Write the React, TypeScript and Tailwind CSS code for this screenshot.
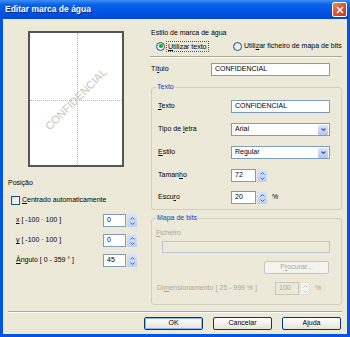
import React from "react";

const inputCls = "flex h-[13px] items-center border border-[#7f9db9] bg-white pl-[3px]";

function Spin({ off }: { off?: boolean }) {
  const c = off ? "#c9c7ba" : "#4d6185";
  return (
    <div
      className={
        off
          ? "ml-[1px] flex h-[13px] w-[10px] flex-col items-center justify-center gap-[2px] rounded-[1px] border border-[#e2e0d4] bg-[#f5f4ef]"
          : "ml-[1px] flex h-[13px] w-[10px] flex-col items-center justify-center gap-[2px] rounded-[1px] bg-gradient-to-b from-[#d9e4fc] to-[#bcd0f7]"
      }
    >
      <svg width="5" height="3" viewBox="0 0 5 3">
        <path d="M0.5 2.5 L2.5 0.5 L4.5 2.5" fill="none" stroke={c} strokeWidth="1" />
      </svg>
      <svg width="5" height="3" viewBox="0 0 5 3">
        <path d="M0.5 0.5 L2.5 2.5 L4.5 0.5" fill="none" stroke={c} strokeWidth="1" />
      </svg>
    </div>
  );
}

function Select({ value }: { value: string }) {
  return (
    <div className={`${inputCls} w-[99px] pr-[1px]`}>
      <span className="flex-1">{value}</span>
      <div className="flex h-[10px] w-[10px] items-center justify-center rounded-[1px] bg-gradient-to-b from-[#dce6fd] to-[#b1c6f3]">
        <svg width="5" height="3" viewBox="0 0 5 3">
          <path d="M0.5 0.5 L2.5 2.5 L4.5 0.5" fill="none" stroke="#4d6185" strokeWidth="1.2" />
        </svg>
      </div>
    </div>
  );
}

function Btn({ label, main }: { label: string; main?: boolean }) {
  return (
    <div className="flex h-[13px] w-[59px] items-center justify-center rounded-[2px] border border-[#003c74] bg-gradient-to-b from-white to-[#e6e3d6]">
      <div
        className={
          main
            ? "flex h-full w-full items-center justify-center rounded-[1px] border border-[#8fb2f0]"
            : "flex h-full w-full items-center justify-center"
        }
      >
        {label}
      </div>
    </div>
  );
}

function Group({ title, h, children }: { title: string; h: string; children: React.ReactNode }) {
  return (
    <div className={`relative ml-[2px] w-[191px] rounded-[3px] border border-[#d0d0bf] ${h}`}>
      <span className="absolute -top-[6px] left-[4px] bg-[#ece9d8] px-[1px] leading-[10px] text-[#0046d5]">
        {title}
      </span>
      {children}
    </div>
  );
}

export default function App() {
  return (
    <div className="h-[337px] w-[350px] bg-[#0055e5] font-['Liberation_Sans',Arial,sans-serif] text-[7px] text-black">
      {/* title bar */}
      <div className="flex h-[19px] items-center justify-between bg-[linear-gradient(to_bottom,#3d8ef5_0%,#0a60e6_25%,#0055e5_60%,#0049d2_100%)] pl-[5px] pr-[3px]">
        <span className="text-[8.5px] font-bold text-white [text-shadow:1px_1px_#0a2a8a]">Editar marca de água</span>
        <div className="flex h-[15px] w-[15px] items-center justify-center rounded-[2px] border border-white bg-gradient-to-br from-[#e88a6a] via-[#de5330] to-[#c2391a]">
          <svg width="8" height="8" viewBox="0 0 8 8">
            <path d="M1 1 L7 7 M7 1 L1 7" stroke="white" strokeWidth="1.6" />
          </svg>
        </div>
      </div>

      {/* body */}
      <div className="mx-[3px] h-[315px] bg-[#ece9d8]">
        <div className="flex h-[292px]">
          {/* left column */}
          <div className="flex w-[146px] flex-col">
            <div className="relative ml-[25px] mt-[12px] flex h-[136px] w-[96px] items-center justify-center overflow-hidden border-2 border-[#555555] bg-white">
              <div className="absolute left-[47px] top-0 h-full border-l border-dotted border-[#b8b8a8]" />
              <div className="absolute left-0 top-[67px] w-full border-t border-dotted border-[#b8b8a8]" />
              <span className="relative -rotate-45 whitespace-nowrap text-[11px] text-[#c6c6b6]">CONFIDENCIAL</span>
            </div>

            <div className="ml-[5px] mt-[11px] h-[10px] leading-[10px]">Posição</div>

            <div className="ml-[8px] mt-[7px] flex h-[10px] items-center">
              <div className="h-[9px] w-[9px] border border-[#1c5180] bg-gradient-to-br from-[#dcdcd4] to-white" />
              <span className="ml-[2px]">
                <u>C</u>entrado automaticamente
              </span>
            </div>

            {[
              { l: <><u>x</u> [ -100 · 100 ]</>, v: "0", mt: "mt-[9px]" },
              { l: <><u>y</u> [ -100 · 100 ]</>, v: "0", mt: "mt-[7px]" },
              { l: <><u>Â</u>ngulo [ 0 - 359 ° ]</>, v: "45", mt: "mt-[7px]" },
            ].map((r, i) => (
              <div key={i} className={`ml-[13px] flex h-[13px] items-center ${r.mt}`}>
                <span className="w-[87px]">{r.l}</span>
                <div className={`${inputCls} w-[23px]`}>{r.v}</div>
                <Spin />
              </div>
            ))}
          </div>

          {/* right column */}
          <div className="flex w-[193px] flex-col">
            <div className="ml-[2px] mt-[9px] h-[10px] leading-[10px]">Estilo de marca de água</div>
            <div className="ml-[7px] mt-[3px] flex h-[10px] items-center">
              <div className="flex w-[77px] items-center">
                <div className="flex h-[9px] w-[9px] items-center justify-center rounded-full border border-[#1c5180] bg-gradient-to-br from-[#dcdcd4] to-white">
                  <div className="h-[4px] w-[4px] rounded-full bg-[#21a121]" />
                </div>
                <span className="ml-[1px] border border-dotted border-[#555] px-[1px] leading-[9px]">
                  <u>U</u>tilizar texto
                </span>
              </div>
              <div className="h-[9px] w-[9px] rounded-full border border-[#1c5180] bg-gradient-to-br from-[#dcdcd4] to-white" />
              <span className="ml-[2px]">
                Utili<u>z</u>ar ficheiro de mapa de bits
              </span>
            </div>
            <div className="ml-[1px] mt-[5px] border-t border-b border-t-[#aca899] border-b-white" />

            <div className="ml-[2px] mt-[5px] flex h-[13px] items-center">
              <span className="w-[60px]">
                Tí<u>t</u>ulo
              </span>
              <div className={`${inputCls} w-[119px]`}>CONFIDENCIAL</div>
            </div>

            <div className="mt-[11px]">
              <Group title="Texto" h="h-[123px]">
                <div className="flex flex-col pl-[6px] pt-[12px]">
                  <div className="flex h-[13px] items-center">
                    <span className="w-[73px]">
                      <u>T</u>exto
                    </span>
                    <div className={`${inputCls} w-[99px]`}>CONFIDENCIAL</div>
                  </div>
                  <div className="mt-[10px] flex h-[13px] items-center">
                    <span className="w-[73px]">
                      Tipo de <u>l</u>etra
                    </span>
                    <Select value="Arial" />
                  </div>
                  <div className="mt-[10px] flex h-[13px] items-center">
                    <span className="w-[73px]">
                      <u>E</u>stilo
                    </span>
                    <Select value="Regular" />
                  </div>
                  <div className="mt-[10px] flex h-[13px] items-center">
                    <span className="w-[73px]">
                      Taman<u>h</u>o
                    </span>
                    <div className={`${inputCls} w-[25px]`}>72</div>
                    <Spin />
                  </div>
                  <div className="mt-[9px] flex h-[13px] items-center">
                    <span className="w-[73px]">
                      Escu<u>r</u>o
                    </span>
                    <div className={`${inputCls} w-[25px]`}>20</div>
                    <Spin />
                    <span className="ml-[5px]">%</span>
                  </div>
                </div>
              </Group>
            </div>

            <div className="mt-[8px]">
              <Group title="Mapa de bits" h="h-[87px]">
                <div className="flex flex-col pt-[9px] text-[#aca899]">
                  <div className="ml-[4px] h-[10px] leading-[10px]">
                    <u>F</u>icheiro
                  </div>
                  <div className="ml-[10px] mt-[3px] h-[12px] w-[168px] border border-[#b9c5d7]" />
                  <div className="mr-[12px] mt-[8px] flex h-[13px] w-[65px] items-center justify-center self-end rounded-[2px] border border-[#c9c7ba] bg-[#f4f3ee]">
                    P<u>r</u>ocurar...
                  </div>
                  <div className="ml-[5px] mt-[8px] flex h-[13px] items-center">
                    <span className="w-[118px]">
                      Di<u>m</u>ensionamento [ 25 - 999 % ]
                    </span>
                    <div className="flex h-[13px] w-[24px] items-center border border-[#c9c7ba] pl-[3px]">100</div>
                    <Spin off />
                    <span className="ml-[5px]">%</span>
                  </div>
                </div>
              </Group>
            </div>
          </div>
        </div>

        <div className="ml-[5px] mr-[5px] border-t border-b border-t-[#aca899] border-b-white" />

        <div className="mr-[6px] mt-[4px] flex justify-end gap-[10px]">
          <Btn label="OK" main />
          <Btn label="Cancelar" />
          <Btn label="Ajuda" />
        </div>
      </div>
    </div>
  );
}
